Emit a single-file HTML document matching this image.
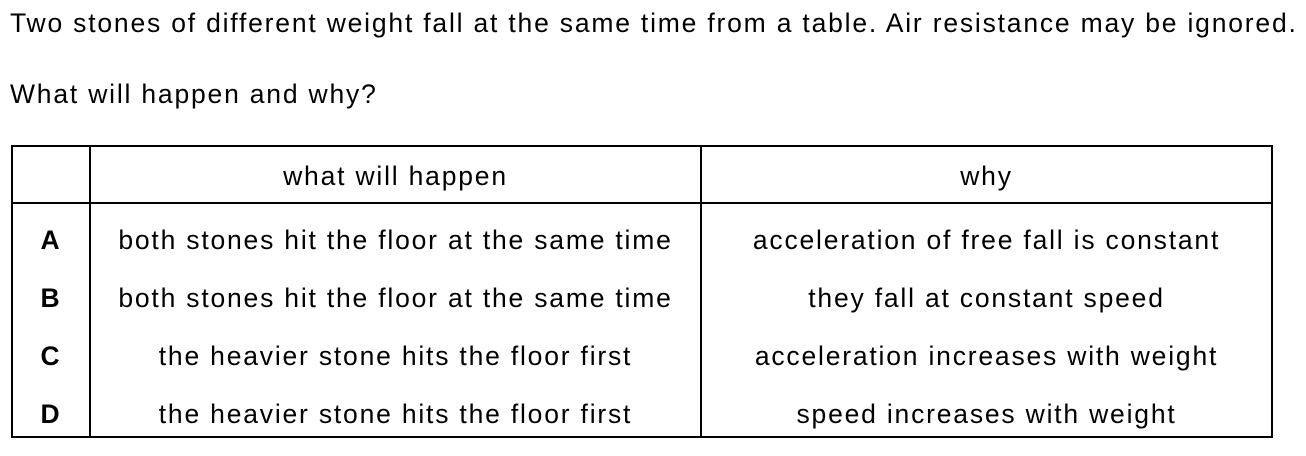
<!DOCTYPE html>
<html><head><style>
body{margin:0;width:1306px;height:456px;background:#fff;font-family:"Liberation Sans",Arial,sans-serif;font-size:26.5px;letter-spacing:1.8px;color:#000;position:relative;overflow:hidden}
.t{position:absolute;white-space:nowrap;line-height:1}
.l{position:absolute;background:#000}
.c{position:absolute;text-align:center;white-space:nowrap;line-height:1}
</style></head><body>
<div class="t" style="left:10px;top:10px">Two stones of different weight fall at the same time from a table. Air resistance may be ignored.</div>
<div class="t" style="left:10px;top:81px">What will happen and why?</div>
<div class="l" style="left:11px;top:145px;width:1262px;height:2px"></div>
<div class="l" style="left:11px;top:202px;width:1262px;height:2px"></div>
<div class="l" style="left:11px;top:436px;width:1262px;height:2px"></div>
<div class="l" style="left:11px;top:145px;width:2px;height:293px"></div>
<div class="l" style="left:89px;top:145px;width:2px;height:293px"></div>
<div class="l" style="left:700px;top:145px;width:2px;height:293px"></div>
<div class="l" style="left:1271px;top:145px;width:2px;height:293px"></div>
<div class="c" style="left:91px;width:609px;top:163px">what will happen</div>
<div class="c" style="left:702px;width:569px;top:163px">why</div>
<div class="c" style="left:13px;width:76px;top:227px;font-weight:bold">A</div>
<div class="c" style="left:91px;width:609px;top:227px">both stones hit the floor at the same time</div>
<div class="c" style="left:702px;width:569px;top:227px">acceleration of free fall is constant</div>
<div class="c" style="left:13px;width:76px;top:285px;font-weight:bold">B</div>
<div class="c" style="left:91px;width:609px;top:285px">both stones hit the floor at the same time</div>
<div class="c" style="left:702px;width:569px;top:285px">they fall at constant speed</div>
<div class="c" style="left:13px;width:76px;top:343px;font-weight:bold">C</div>
<div class="c" style="left:91px;width:609px;top:343px">the heavier stone hits the floor first</div>
<div class="c" style="left:702px;width:569px;top:343px">acceleration increases with weight</div>
<div class="c" style="left:13px;width:76px;top:401px;font-weight:bold">D</div>
<div class="c" style="left:91px;width:609px;top:401px">the heavier stone hits the floor first</div>
<div class="c" style="left:702px;width:569px;top:401px">speed increases with weight</div>
</body></html>
